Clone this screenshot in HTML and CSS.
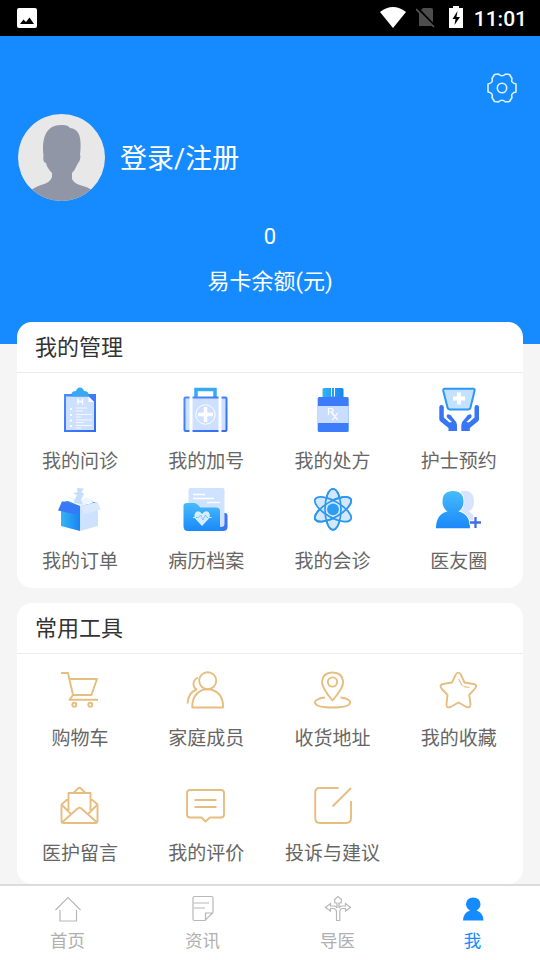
FILE: index.html
```html
<!DOCTYPE html>
<html lang="zh-CN">
<head>
<meta charset="utf-8">
<title>我</title>
<link rel="stylesheet" href="styles.css">
</head>
<body>
<svg class="defs" width="0" height="0" aria-hidden="true">
  <defs>
    <linearGradient id="sky" x1="0" y1="0" x2="0" y2="1"><stop offset="0" stop-color="#48bbfb"/><stop offset="1" stop-color="#1989fa"/></linearGradient>
    <linearGradient id="side" x1="0" y1="0" x2="1" y2="0"><stop offset="0" stop-color="#35b4f5"/><stop offset="1" stop-color="#1984f5"/></linearGradient>
    <linearGradient id="royal" x1="0" y1="0" x2="1" y2="1"><stop offset="0" stop-color="#4b8bff"/><stop offset="1" stop-color="#326af1"/></linearGradient>
  </defs>
</svg>
<div class="screen">
  <header class="status">
    <svg class="status-pic" width="20" height="20" viewBox="0 0 20 20"><rect width="20" height="20" rx="2" fill="#fff"/><path d="M3 16 6.500 11.500 9 14 12.500 9.500 17 16Z" fill="#000"/></svg>
    <div class="status-right">
      <svg class="wifi" width="26" height="21" viewBox="0 0 26 21"><path d="M0 5Q13-5 26 5L13 21Z" fill="#fff"/></svg>
      <svg class="nosim" width="20" height="21" viewBox="0 0 20 21"><path d="M7 1H15Q17 1 17 3V19H3V5Z" fill="#4d4d4d"/><path d="M1 1 19 20" stroke="#000" stroke-width="3"/><path d="M0 2 18 20" stroke="#555" stroke-width="1.7"/></svg>
      <svg class="battery" width="14" height="22" viewBox="0 0 14 22"><path d="M4 0H10V2H14V22H0V2H4Z" fill="#fff"/><path d="M8.500 5 3.500 13H6.500L5.500 19 11 11H7.500Z" fill="#000"/></svg>
      <span class="clock">11:01</span>
    </div>
  </header>

  <section class="hero">
    <div class="settings">
      <svg width="32" height="32" viewBox="0 0 32 32" fill="none" stroke="#dff0ff" stroke-width="1.600" stroke-linejoin="round"><path d="M8.500 2.500 12.500 2Q16 5.500 19.500 2L23.500 2.500 26 6.500Q24.500 11 30 12V20Q24.500 21 26 25.500L23.500 29.500 19.500 30Q16 26.500 12.500 30L8.500 29.500 6 25.500Q7.500 21 2 20V12Q7.500 11 6 6.500Z"/><circle cx="16" cy="16" r="4.700"/></svg>
    </div>
    <div class="profile">
      <svg width="87" height="87" viewBox="0 0 87 87"><clipPath id="face"><circle cx="43.500" cy="43.500" r="43.500"/></clipPath><g clip-path="url(#face)"><rect width="87" height="87" fill="#e8e8e8"/><path d="M25.500 42C24 30 25 11 43 11Q50 10.500 52 14C63 15 63.500 27 62 41Q63 42 61.500 47Q60 49 59 51Q57 56 54 59V65Q56 70 65 72Q73 74 78 80V90H9V80Q14 74 23 71Q32 69 34 63V59Q29 54 28 49Q24.500 48 25.500 42Z" fill="#9096a6"/></g></svg>
      <a class="login">登录/注册</a>
    </div>
    <div class="balance">0</div>
    <div class="balance-label">易卡余额(元)</div>
  </section>

  <main>
    <section class="card manage">
      <h2>我的管理</h2>
      <div class="grid">
        <div class="item">
          <svg viewBox="0 0 48 48"><path d="M8 8H40V46H8Z" fill="url(#royal)"/><path d="M10 10.500H32.500L38 16V44H10Z" fill="#cde0ff"/><path d="M32.500 10.500V16H38Z" fill="#fff"/><path d="M15.500 10.500V8.500Q15.500 5 20 5Q21 1.500 24 1.500T28 5Q32.500 5 32.500 8.500V10.500Z" fill="#38a7f6"/><path d="M22 12.500V18.500M26.500 12.500V18.500M22 15.500H26.500" stroke="#fff" stroke-width="1.300"/><path d="M20 22H31M20 25H27M20 28.500H36M20 31H25M20 34H36M20 36.500H28M20 39.500H36M20 42H25" stroke="#fff" stroke-width=".8" fill="none"/><path d="M14 22h2v2h-2zM14 28h2v2h-2zM14 33.500h2v2h-2zM14 39h2v2h-2z" fill="#fff"/></svg>
          <span>我的问诊</span>
        </div>
        <div class="item">
          <svg viewBox="0 0 48 48"><path d="M14 12V3.500H33V12" fill="none" stroke="#38a9f5" stroke-width="3.500"/><rect x="1.500" y="10.500" width="44" height="35.500" rx="2" fill="url(#royal)"/><path d="M3.500 12.500H43.500V44H3.500Z" fill="#cde0ff"/><path d="M7.500 10H10.500V46.500H7.500ZM36.500 10H39.500V46.500H36.500Z" fill="#fff"/><circle cx="23.500" cy="28.500" r="9.700" fill="none" stroke="#fff"/><path d="M23.500 21V36M16 28.500H31" stroke="#fff" stroke-width="3.500"/></svg>
          <span>我的加号</span>
        </div>
        <div class="item">
          <svg viewBox="0 0 48 48"><path d="M13.500 3.500Q13.500 2 15 2H33Q34.500 2 34.500 3.500V12H13.500Z" fill="url(#side)"/><path d="M22.500 1V10.500M25.500 1V10.500" stroke="#fff" stroke-width="1"/><rect x="8.700" y="11" width="31" height="35" rx="1.500" fill="#3c7cfa"/><path d="M8.700 20H39.700V37H8.700Z" fill="#c9deff"/><path d="M19.500 29V22.500H22Q24 22.500 24 24.300T22 26H19.500M22 26 24.500 29M23.500 27 28.500 34M28.500 27 23.500 34" fill="none" stroke="#fff" stroke-width="1.200"/></svg>
          <span>我的处方</span>
        </div>
        <div class="item">
          <svg viewBox="0 0 48 48"><path d="M9.500 2.700H38.500Q40 3 39.500 5L35.500 21.500Q35 23.500 33 23.500H15Q13 23.500 12.500 21.500L8.300 5Q8 3 9.500 2.700Z" fill="#c4e1ff" stroke="#2998f6" stroke-width="2"/><path d="M24 6.500V18.500M18 12.500H30" stroke="#fff" stroke-width="4"/><g fill="#3876f5"><path id="hand" d="M4.300 21Q4.300 19 6.500 19T8.800 21V31.500L14.500 36.500 17 36 12 31.500Q11 29 13 28.300L15.500 29 19.500 34Q22 36 22 39V45H13.500V42L5.500 35.500Q4.300 34.500 4.300 33Z"/><use href="#hand" transform="matrix(-1 0 0 1 48.300 0)"/></g></svg>
          <span>护士预约</span>
        </div>
        <div class="item">
          <svg viewBox="0 0 48 48"><path d="M5 16 12 15 24 20 42 16 24 23Z" fill="#2f8dec"/><path d="M10 10 18 12 22 16 30 11 38 15 25 20Z" fill="#eff6ff"/><path d="M36 15.500 42 17.500 38 18.500Z" fill="#2f9cf2"/><path d="M18.500 14 21 9 17 7.500 21.500 6 21 2 28 2.500 25.500 6 28 8 25 14 27 18.500 18 17Z" fill="#c6defd"/><path d="M5 18 24 20V45L5 40Z" fill="url(#side)"/><path d="M24 20 42 17V40L24 45Z" fill="#cee2ff"/><path d="M6 15.500 23.500 20 20 28.500 2 24.500Z" fill="#3978f6"/><path d="M24.500 20 41.500 16 45 23.500 28 28Z" fill="#dbe9ff"/></svg>
          <span>我的订单</span>
        </div>
        <div class="item">
          <svg viewBox="0 0 48 48"><path d="M36 27H43Q45.500 27 45.500 30V41Q45.500 45 41 45H30Z" fill="#3c73ee"/><path d="M8.500 2H40.500Q42.500 2 42.500 4V38Q42.500 41 39 41H6.500V4Q6.500 2 8.500 2Z" fill="#cfe2ff"/><path d="M11 8.500H23M11 12.500H32M25 16.500H38" stroke="#fff" stroke-width="1.500"/><path d="M1.500 20Q1.500 17 5 17H12Q14 17 16 19L18.500 21.500H34Q38 21.500 38 25V39Q38 45 43 45H6Q1.500 45 1.500 40Z" fill="url(#sky)"/><path d="M20 40 13.500 33Q11 29 14 26Q17.500 24 20 28Q23 24 26.500 26Q29 29 26.500 33Z" fill="#d8edff"/><path d="M11 31.500H14M26 31.500H29.500" stroke="#d8edff"/><path d="M14 31.500H16.500L18.500 29 21 34 23.500 29 25 31.500H26" fill="none" stroke="#67b9fb" stroke-width=".8"/></svg>
          <span>病历档案</span>
        </div>
        <div class="item">
          <svg viewBox="0 0 48 48"><g transform="translate(24 23.300)" stroke="#2a99ed" stroke-width="1.700"><g fill="#d5e6ff"><ellipse rx="8" ry="20.500"/><ellipse rx="8" ry="20.500" transform="rotate(60)"/><ellipse rx="8" ry="20.500" transform="rotate(-60)"/></g><g fill="none"><ellipse rx="8" ry="20.500"/><ellipse rx="8" ry="20.500" transform="rotate(60)"/></g><circle r="5.900" fill="#2c9df3" stroke="none"/></g></svg>
          <span>我的会诊</span>
        </div>
        <div class="item">
          <svg viewBox="0 0 48 48"><path d="M26 5Q39 3 39 16Q39 23 33.500 25.500Q40 28 43 38H28L24 24Z" fill="#d7e4fd"/><path d="M1 42.300Q1 28 12.500 25.500Q7.500 22 7.500 15.500Q7.500 5 18 5T28.500 15.500Q28.500 22 23.500 25.500Q35 28 35 42.300Z" fill="url(#sky)" stroke="#fff" stroke-width="1.600" paint-order="stroke"/><path d="M40.500 29.500V43.500M34.500 36.500H47.500" stroke="#fff" stroke-width="4.500"/><path d="M40.500 31V42M35 36.500H46" stroke="#426ce4" stroke-width="2.300"/></svg>
          <span>医友圈</span>
        </div>
      </div>
    </section>

    <section class="card tools">
      <h2>常用工具</h2>
      <div class="grid">
        <div class="item">
          <svg viewBox="0 0 48 48"><path d="M5 7H12L17 29H35.500L41 13H14M17 29 13.500 33.700H42"/><circle cx="18.300" cy="38.700" r="2"/><circle cx="34.300" cy="38.700" r="2"/></svg>
          <span>购物车</span>
        </div>
        <div class="item">
          <svg viewBox="0 0 48 48"><circle cx="25.700" cy="14.700" r="8.500"/><path d="M10.300 41.500Q10 33 14.500 28Q19 23.200 25.500 23.200T37 28Q41.500 33 41 41.500ZM16 11.500Q11 14 11.500 18.500Q12 22.500 14.500 23.500Q6 27 5.500 37.500"/></svg>
          <span>家庭成员</span>
        </div>
        <div class="item">
          <svg viewBox="0 0 48 48"><path d="M23.500 34.500Q13 22 13 16Q13.500 6.500 23.500 6.500T34.200 16Q34.200 22 23.500 34.500Z"/><circle cx="23.500" cy="16" r="4.600"/><path d="M16 31.500C1.500 33 1.500 41.500 23.500 41.500S45.500 33 31.500 31.500"/></svg>
          <span>收货地址</span>
        </div>
        <div class="item">
          <svg viewBox="0 0 48 48"><path d="M20.800 8.500Q23.300 4.800 25.800 8.500L29.500 16.500 38.500 18Q43 19 40 22.500L34.200 29 35.500 38Q35.500 42.500 31.500 41L23.500 36.500 15.500 41Q11 42.500 11.500 38L12.500 29 6.500 22.500Q4 19 8 18L17 16.500Z"/><path d="M23.500 13 27.500 20M28.500 20.700 34.500 21.500" stroke-width="1.200"/></svg>
          <span>我的收藏</span>
        </div>
        <div class="item">
          <svg viewBox="0 0 48 48"><path d="M17.500 12 22 7.500Q23.500 6 25 7.500L29.500 12M12.500 31V12H34.500V31M12.500 17.500 5.500 23.500 15 33M34.500 17.500 41.500 23.500 32 33M5.500 23.500V40Q5.500 42 7.500 42H39.500Q41.500 42 41.500 40V23.500M6.500 41 21 28Q23.500 25.500 26 28L40.500 41"/></svg>
          <span>医护留言</span>
        </div>
        <div class="item">
          <svg viewBox="0 0 48 48"><path d="M8 9H39Q42 9 42 12V33.500Q42 36.500 39 36.500H28L23.500 40.500 19.500 36.500H8Q5 36.500 5 33.500V12Q5 9 8 9ZM12.500 19H34.500M12.500 26H34.500"/></svg>
          <span>我的评价</span>
        </div>
        <div class="item">
          <svg viewBox="0 0 48 48"><path d="M29.500 7H10.500Q6.200 7 6.200 12V37Q6.200 42 11 42H37Q42 42 42 37V20M23.500 25.500 42 7"/></svg>
          <span>投诉与建议</span>
        </div>
      </div>
    </section>
  </main>

  <nav class="tabs">
    <a class="tab"><svg viewBox="0 0 28 28"><path d="M1.500 15 14 2.500 26.500 15M6 15V26H22.500V15"/></svg><span>首页</span></a>
    <a class="tab"><svg viewBox="0 0 28 28"><path d="M5.500 1.500H22.500Q24 1.500 24 3V17.500L16 25.500H5.500Q4 25.500 4 24V3Q4 1.500 5.500 1.500ZM16.500 25V18H24M5 8H20M5 13H16"/></svg><span>资讯</span></a>
    <a class="tab"><svg viewBox="0 0 28 28"><path d="M12.500 25.500V17Q12.500 13.500 8.500 13.500H6.500V16L1.500 12.500 6.500 8.500V11H10Q12.500 11 13 13V8H11L10.500 4.500 14 1.500 17.500 4.500 17 8H15V13Q16 11 18 11H21.500V8.500L26.500 12.500 21.500 16V13.500H18.500Q15.800 13.500 15.800 17V25.500Z"/></svg><span>导医</span></a>
    <a class="tab active"><svg viewBox="0 0 28 28"><path d="M4 25.500Q4 18 11 15.500Q7 13 7 9Q7.500 2.500 14.200 2.500T21.500 9Q21.500 13 17.500 15.500Q24.500 18 24.500 25.500Z"/></svg><span>我</span></a>
  </nav>
</div>
</body>
</html>
```
FILE: styles.css
```css
* { box-sizing: border-box; }
body {
  margin: 0;
  background: #f5f5f5;
  font-family: Roboto, "Noto Sans CJK SC", sans-serif;
}
.defs { position: absolute; }
.screen {
  width: 540px;
  height: 960px;
  display: flex;
  flex-direction: column;
  overflow: hidden;
}
svg { display: block; flex: none; }

.status {
  height: 36px;
  flex: none;
  display: flex;
  justify-content: space-between;
  padding: 0 13px 0 17px;
  background: #000;
  color: #fff;
}
.status-pic { margin-top: 8px; }
.status-right { display: flex; align-items: flex-start; }
.wifi { margin: 7px 10px 0 0; }
.nosim { margin: 7px 13px 0 0; }
.battery { margin: 6px 11px 0 0; }
.clock {
  font-size: 21px;
  font-weight: 500;
  line-height: 38px;
}

.hero {
  height: 308px;
  flex: none;
  background: #168bff;
  color: #fff;
}
.settings {
  display: flex;
  justify-content: flex-end;
  padding: 36px 22px 0 0;
}
.profile {
  display: flex;
  align-items: center;
  gap: 15px;
  margin: 10px 0 0 18px;
}
.login {
  padding-top: 2px;
  font-size: 27px;
  line-height: 40px;
}
.balance {
  margin-top: 20px;
  text-align: center;
  font-size: 22px;
  line-height: 32px;
}
.balance-label {
  margin-top: 13px;
  text-align: center;
  font-size: 22px;
  line-height: 32px;
}

main {
  height: 540px;
  flex: none;
  margin-top: -22px;
  padding: 0 17px;
  display: flex;
  flex-direction: column;
  gap: 15px;
}
.card {
  flex: none;
  background: #fff;
  border-radius: 15px;
}
.manage { height: 266px; }
.tools { height: 281px; }
h2 {
  height: 51px;
  margin: 0;
  padding-left: 18px;
  border-bottom: 1px solid #ebebeb;
  font-size: 22px;
  font-weight: 400;
  line-height: 52px;
  color: #333;
}
.grid {
  display: grid;
  grid-template-columns: repeat(4, 1fr);
  padding-right: 1px;
}
.manage .grid { padding-top: 13px; grid-auto-rows: 100px; }
.tools .grid { padding-top: 12px; grid-auto-rows: 115px; }
.item {
  display: flex;
  flex-direction: column;
  align-items: center;
}
.item svg { width: 48px; height: 48px; }
.item span {
  margin-top: 14px;
  font-size: 19px;
  line-height: 28px;
  color: #666;
  white-space: nowrap;
}
.tools .item span { margin-top: 11px; }
.tools svg {
  fill: none;
  stroke: #e5be80;
  stroke-width: 1.9;
  stroke-linejoin: round;
}

.tabs {
  position: relative;
  height: 76px;
  flex: none;
  margin-top: 22px;
  display: grid;
  grid-template-columns: repeat(4, 1fr);
  background: #fff;
  border-top: 2px solid #dcdcdc;
}
.tab {
  display: flex;
  flex-direction: column;
  align-items: center;
  padding-top: 9px;
  color: #b0b0b0;
  font-size: 17.5px;
  line-height: 26px;
}
.tab svg {
  width: 28px;
  height: 28px;
  fill: none;
  stroke: #b8b8b8;
  stroke-width: 1.2;
}
.tab span { margin-top: 5px; }
.tab.active { color: #168bff; }
.tab.active svg { fill: #168bff; stroke: none; }
```
